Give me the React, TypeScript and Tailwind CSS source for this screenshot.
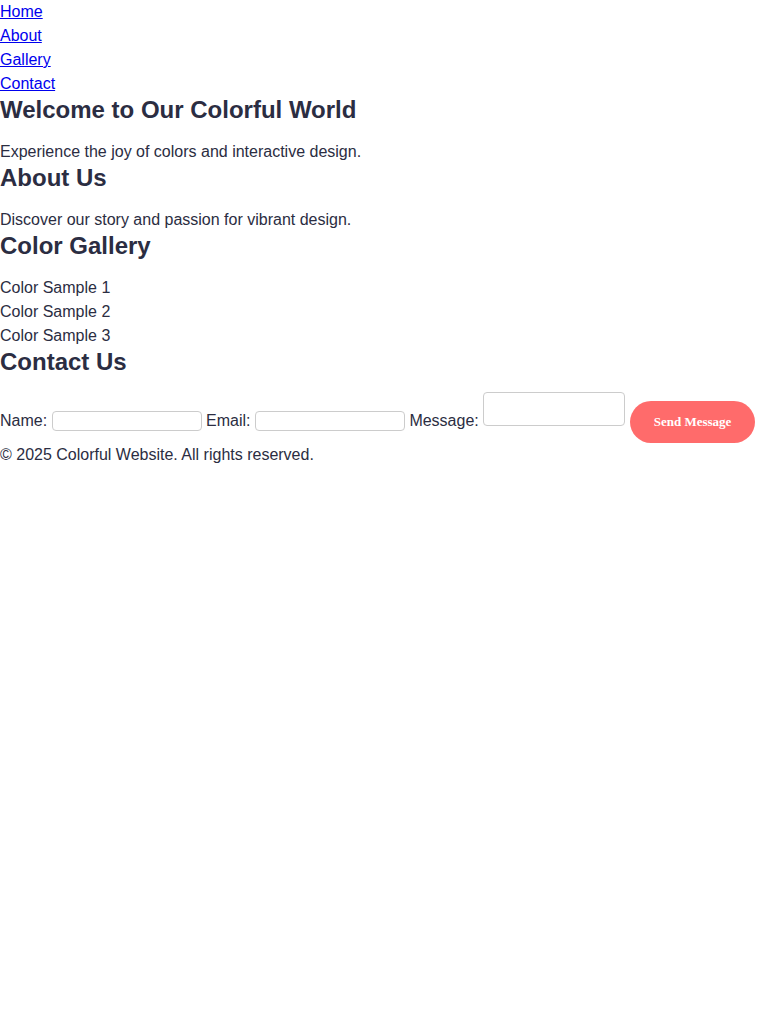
export default function App() {
  const links = ["Home", "About", "Gallery", "Contact"];
  const samples = ["Color Sample 1", "Color Sample 2", "Color Sample 3"];
  const heading = "text-2xl leading-7 font-bold mb-4";

  return (
    <div className="font-['Liberation_Sans',Arial,sans-serif] text-[16px] leading-6 text-[#2b2d42] bg-white min-h-[1024px]">
      <nav>
        <ul>
          {links.map((link) => (
            <li key={link}>
              <a href="#" className="text-[#0000ee] underline">
                {link}
              </a>
            </li>
          ))}
        </ul>
      </nav>
      <section>
        <h2 className={heading}>Welcome to Our Colorful World</h2>
        <p>Experience the joy of colors and interactive design.</p>
      </section>
      <section>
        <h2 className={heading}>About Us</h2>
        <p>Discover our story and passion for vibrant design.</p>
      </section>
      <section>
        <h2 className={heading}>Color Gallery</h2>
        {samples.map((s) => (
          <div key={s}>{s}</div>
        ))}
      </section>
      <section>
        <h2 className={heading}>Contact Us</h2>
        <form>
          <label>Name:</label>{" "}
          <input type="text" className="w-[150px] h-5 border border-[#ccc] rounded align-baseline" />{" "}
          <label>Email:</label>{" "}
          <input type="email" className="w-[150px] h-5 border border-[#ccc] rounded align-baseline" />{" "}
          <label>Message:</label>{" "}
          <textarea className="w-[142px] h-[34px] border border-[#ccc] rounded align-baseline resize-none" />{" "}
          <button
            type="button"
            className="bg-[#ff6b6b] text-white font-['Liberation_Serif',serif] font-bold text-[13px] leading-[18px] px-6 py-3 rounded-full"
          >
            Send Message
          </button>
        </form>
      </section>
      <footer>
        <p>© 2025 Colorful Website. All rights reserved.</p>
      </footer>
    </div>
  );
}
